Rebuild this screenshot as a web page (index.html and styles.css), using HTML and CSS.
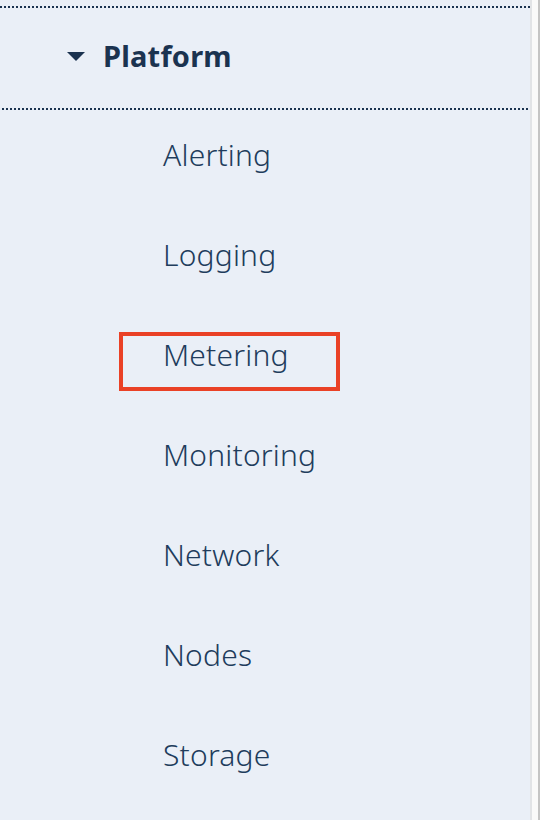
FILE: index.html
```html
<!DOCTYPE html>
<html lang="en">
<head>
<meta charset="utf-8">
<title>Platform navigation</title>
<link rel="stylesheet" href="styles.css">
</head>
<body>
<div class="frame">
  <nav class="panel">
    <div class="prev-edge"></div>
    <div class="section-head">
      <svg class="caret" width="18" height="9" viewBox="0 0 18 9" aria-hidden="true"><path d="M0 0 H18 L9 9 Z" fill="#1b3350"/></svg>
      <span class="section-title">Platform</span>
    </div>
    <div class="divider"></div>
    <ul class="items">
      <li class="item"><span>Alerting</span></li>
      <li class="item"><span>Logging</span></li>
      <li class="item"><span class="highlight">Metering</span></li>
      <li class="item"><span>Monitoring</span></li>
      <li class="item"><span>Network</span></li>
      <li class="item"><span>Nodes</span></li>
      <li class="item"><span>Storage</span></li>
    </ul>
  </nav>
  <div class="gutter">
    <div class="gutter-edge"></div>
    <div class="gutter-track"></div>
    <div class="gutter-rail"></div>
  </div>
</div>
</body>
</html>
```

FILE: styles.css
```css
html, body {
  margin: 0;
  padding: 0;
  height: 100%;
  overflow: hidden;
}

body {
  font-family: "Noto Sans", "Open Sans", sans-serif;
  color: #1d3756;
  background: #ffffff;
}

.frame {
  display: flex;
  width: 540px;
  height: 820px;
}

.panel {
  width: 530px;
  height: 820px;
  background: #eaeff7;
  display: flex;
  flex-direction: column;
}

.prev-edge {
  height: 6px;
  border-bottom: 2px dotted #1b3350;
}

.section-head {
  height: 100px;
  display: flex;
  align-items: center;
  padding-left: 67px;
  gap: 18px;
  box-sizing: border-box;
  padding-bottom: 5px;
}

.caret {
  display: block;
  margin-top: 2px;
}

.section-title {
  font-size: 29px;
  font-weight: 700;
  color: #1b3350;
  letter-spacing: 0.2px;
}

.divider {
  margin: 0 2px;
  border-top: 2px dotted #1b3350;
}

.items {
  list-style: none;
  margin: -6px 0 0;
  padding: 0;
}

.item {
  height: 100px;
  display: flex;
  align-items: center;
  padding-left: 163px;
  font-size: 30px;
  font-weight: 300;
  color: #213c5c;
  letter-spacing: 0.2px;
}

.highlight {
  position: relative;
}

.highlight::after {
  content: "";
  position: absolute;
  left: -44px;
  top: -2px;
  width: 221px;
  height: 59px;
  border: 4px solid #ea4126;
  box-sizing: border-box;
}

.gutter {
  flex: 1;
  display: flex;
}

.gutter-edge {
  width: 2px;
  background: #e1e3e6;
}

.gutter-track {
  flex: 1;
  background: #f9f9f9;
}

.gutter-rail {
  width: 2px;
  background: #c4c4c4;
}
```
